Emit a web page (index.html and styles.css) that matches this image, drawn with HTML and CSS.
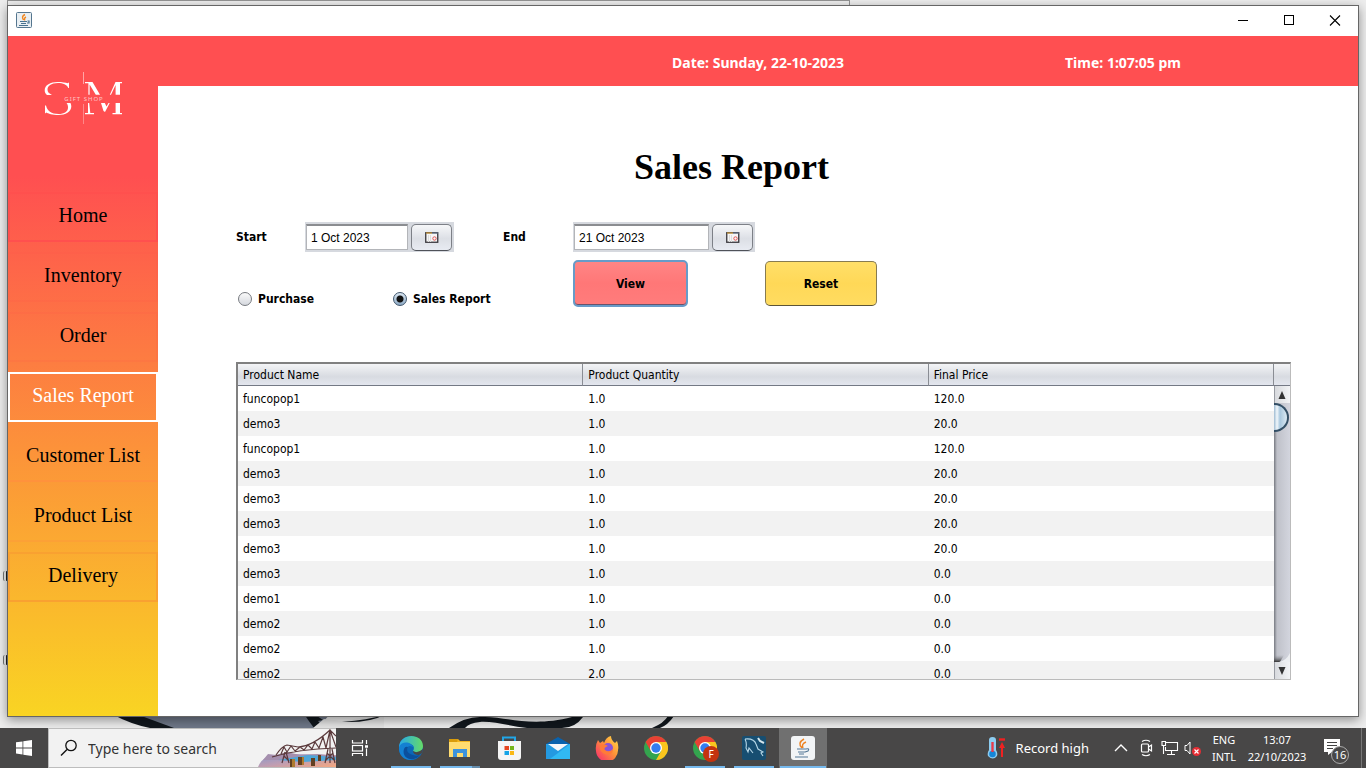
FILE: index.html
```html
<!DOCTYPE html>
<html lang="en">
<head>
<meta charset="utf-8">
<title>Sales Report</title>
<link rel="stylesheet" href="styles.css">
</head>
<body>
<div class="desktop">
  <svg class="wallpaper" viewBox="0 0 1366 14" preserveAspectRatio="none" aria-hidden="true">
    <path d="M120 0H330L318 14H168Z" fill="#6f7888"/>
    <path d="M112 0H136L174 14H150Q130 10 112 0Z" fill="#11171d"/>
    <path d="M304 0H314L323 6 318 7 324 14H314Q308 6 304 0Z" fill="#11171d"/>
    <path d="M313 14L324 5 342 7 384 0V14Z" fill="#e4e4e4"/>
    <path d="M342 8Q368 6 384 1Q370 9 342 8Z" fill="#11171d"/>
    <path d="M449 14Q466 2 482 3C505 2 530 14 572 3L583 3Q575 14 562 14H527C510 12 492 7 480 8Q469 9 465 14Z" fill="#11171d"/>
    <path d="M652 14Q664 9 668 2H674Q668 11 660 14Z" fill="#11171d"/>
  </svg>
  <span class="scrap scrap-one"></span><span class="scrap scrap-two"></span>
  <div class="back-window"></div>
  <div class="window">
    <div class="titlebar">
      <svg class="app-icon" viewBox="0 0 16 16" aria-hidden="true"><rect x=".5" y=".5" width="15" height="15" rx="1" fill="#e9eff3" stroke="#55768f"/><path d="M9 2.500C6 4 6 5.500 7.500 8M10 5C7.500 6 9 7 8.500 8.500" fill="none" stroke="#f0851d" stroke-width="1.400"/><path d="M4 9.500H11M5 11.500H10M3 13.500H12M11.500 9H13V11H11" fill="none" stroke="#47718f" stroke-width="1.200"/></svg>
      <div class="window-buttons">
        <button type="button" aria-label="Minimize"><svg viewBox="0 0 12 12"><path d="M1 5.500H11" stroke="#000"/></svg></button>
        <button type="button" aria-label="Maximize"><svg viewBox="0 0 12 12"><rect x="1.500" y=".5" width="9" height="9" fill="none" stroke="#000"/></svg></button>
        <button type="button" aria-label="Close"><svg viewBox="0 0 12 12"><path d="M1 .5 11 10.500M11 .5 1 10.500" stroke="#000" stroke-width="1.100"/></svg></button>
      </div>
    </div>
    <div class="app">
      <aside class="sidebar">
        <svg class="logo" viewBox="0 0 80 54" role="img" aria-label="SM Gift Shop">
          <path d="M40.500 1V13" stroke="#ffa5a6"/><path d="M40.500 33V53" stroke="#ff8889"/>
          <g fill="#fff">
            <path d="M26 11.500V17H25.300C24 13.500 20 12 15 12C8 12 4.500 15 4.500 18.500C4.500 21 6 22.500 9 24H4C2.500 22.800 1.700 21.500 1.700 19.300C1.700 14 7.500 11 14.500 11C19 11 23 11.600 24.500 12.300Z"/>
            <path d="M2 34.500H3C4 39.500 8.500 43 15.500 43C21.500 43 25 40.500 25 36.500C25 34.500 24.500 33 23.500 32H27.500Q28.300 33.500 28.300 35.500C28.300 40.500 22.500 44 15.500 44C9.500 44 5 42.500 3.300 41.500L2 42.500Z"/>
            <path d="M42 11H49.500L57 23.800H52.800L46.600 13.500V23.800H45.400V12.300H42ZM72.500 11H79V12.200H77V23.800H72.600V14L68 23.800H66.800ZM45 32H46.200L47.300 42H51V43.200H42V42H45ZM58 32H61.800L63.500 35.500 65.500 32H66.700L62 41 60.500 40ZM72.600 32H77V42H79V43.200H69.500V42H72.600Z"/>
          </g>
          <text x="41" y="30" class="logo-text" text-anchor="middle">GIFT SHOP</text>
        </svg>
        <nav class="nav">
          <button type="button" class="nav-item nav-home">Home</button>
          <button type="button" class="nav-item">Inventory</button>
          <button type="button" class="nav-item">Order</button>
          <button type="button" class="nav-item nav-active">Sales Report</button>
          <button type="button" class="nav-item nav-customer">Customer List</button>
          <button type="button" class="nav-item nav-product">Product List</button>
          <button type="button" class="nav-item nav-delivery">Delivery</button>
        </nav>
      </aside>
      <div class="page">
        <header class="topbar"><span class="date">Date: Sunday, 22-10-2023</span><span class="time">Time: 1:07:05 pm</span></header>
        <main class="content">
          <h1>Sales Report</h1>
          <form class="filters">
            <label for="start">Start</label>
            <div class="date-field date-start"><input id="start" type="text" value="1 Oct 2023"><button type="button" aria-label="Pick start date"><svg viewBox="0 0 14 12"><rect x=".75" y=".75" width="12" height="9.500" fill="#f6f6f6" stroke="#37363b" stroke-width="1.300"/><path d="M1 1H7" stroke="#e2a32c"/><path d="M7 1H13" stroke="#67768c"/><path d="M3.500 3V10M5.500 3V10" stroke="#ddd"/><circle cx="9.500" cy="6.500" r="1.700" fill="none" stroke="#e25555"/></svg></button></div>
            <label for="end">End</label>
            <div class="date-field date-end"><input id="end" type="text" value="21 Oct 2023"><button type="button" aria-label="Pick end date"><svg viewBox="0 0 14 12"><rect x=".75" y=".75" width="12" height="9.500" fill="#f6f6f6" stroke="#37363b" stroke-width="1.300"/><path d="M1 1H7" stroke="#e2a32c"/><path d="M7 1H13" stroke="#67768c"/><path d="M3.500 3V10M5.500 3V10" stroke="#ddd"/><circle cx="9.500" cy="6.500" r="1.700" fill="none" stroke="#e25555"/></svg></button></div>
            <div class="kinds">
              <label><input type="radio" name="kind">Purchase</label>
              <label><input type="radio" name="kind" checked>Sales Report</label>
            </div>
            <button type="button" class="action view">View</button>
            <button type="button" class="action reset">Reset</button>
          </form>
          <div class="table-panel">
            <div class="table-scroll">
              <table>
                <thead><tr><th>Product Name</th><th>Product Quantity</th><th>Final Price</th></tr></thead>
                <tbody>
                  <tr><td>funcopop1</td><td>1.0</td><td>120.0</td></tr>
                  <tr><td>demo3</td><td>1.0</td><td>20.0</td></tr>
                  <tr><td>funcopop1</td><td>1.0</td><td>120.0</td></tr>
                  <tr><td>demo3</td><td>1.0</td><td>20.0</td></tr>
                  <tr><td>demo3</td><td>1.0</td><td>20.0</td></tr>
                  <tr><td>demo3</td><td>1.0</td><td>20.0</td></tr>
                  <tr><td>demo3</td><td>1.0</td><td>20.0</td></tr>
                  <tr><td>demo3</td><td>1.0</td><td>0.0</td></tr>
                  <tr><td>demo1</td><td>1.0</td><td>0.0</td></tr>
                  <tr><td>demo2</td><td>1.0</td><td>0.0</td></tr>
                  <tr><td>demo2</td><td>1.0</td><td>0.0</td></tr>
                  <tr><td>demo2</td><td>2.0</td><td>0.0</td></tr>
                </tbody>
              </table>
            </div>
            <div class="scrollbar" aria-hidden="true">
              <div class="corner"></div>
              <div class="arrow"><svg viewBox="0 0 8 8"><path d="M4 0 7.500 8H.5Z" fill="#333"/></svg></div>
              <div class="track"><div class="thumb"></div><svg class="curve" viewBox="0 0 16 9"><defs><linearGradient id="shade" x2="0" y2="1"><stop stop-color="#8b8d95" stop-opacity="0"/><stop offset="1" stop-color="#333"/></linearGradient></defs><path d="M0 2H10L6 9H0Z" fill="url(#shade)"/><path d="M16 0V9H5Q12 8 16 0Z" fill="#eceef1"/></svg></div>
              <div class="arrow"><svg viewBox="0 0 8 8"><path d="M.5 0H7.500L4 8Z" fill="#333"/></svg></div>
            </div>
          </div>
        </main>
      </div>
    </div>
  </div>
</div>
<footer class="taskbar">
  <button type="button" class="start" aria-label="Start"><svg viewBox="0 0 16 16" fill="#fff"><path d="M0 2.300 6.500 1.400V7.500H0ZM7.300 1.300 16 0V7.500H7.300ZM0 8.400H6.500V14.500L0 13.600ZM7.300 8.400H16V16L7.300 14.700Z"/></svg></button>
  <div class="search">
    <svg class="magnifier" viewBox="0 0 18 18"><circle cx="11" cy="6.500" r="5.200" fill="none" stroke="#111" stroke-width="1.300"/><path d="M7 10.500 1 16.500" stroke="#111" stroke-width="1.400"/></svg>
    <input type="text" placeholder="Type here to search" aria-label="Type here to search">
    <svg class="bridge" viewBox="0 0 78 38">
      <defs><linearGradient id="sea" x2="1" y2="1"><stop offset="0" stop-color="#8297cd"/><stop offset=".5" stop-color="#be9db3"/><stop offset="1" stop-color="#f6a77e"/></linearGradient></defs>
      <path d="M0 38Q4 28 14 27L33 25 78 26V38Z" fill="url(#sea)"/><path d="M5 31 10 25 18 26 29 23 42 26 60 25 78 27V30L30 31Z" fill="#a58fae"/><path d="M20 31 50 26 78 28V31L45 33Z" fill="#4ea6d8"/>
      <g fill="none" stroke="#5b3a3c" stroke-width="1.200"><path d="M14 28Q40 20 78 19M18 26Q24 17 29 16L40 18Q55 17 72 1L78 7M23 25 26 18 29 23 33 17 37 22 42 18 46 21 50 16 54 20 57 13 61 19 65 8 68 19 72 1 78 18M72 1V34M70 20 67 34M74 20 77 34M69 24 76 31M75 24 68 31M27 23 24 34M28 23 31 34M26 27 31 32"/></g>
      <path d="M32 30H37V38H32ZM40 28H46V36H40ZM53 29H57V37H53ZM60 26H63V32H60Z" fill="#624021"/><path d="M34 30H37V38H34ZM44 28H46V36H44Z" fill="#ae7b2e"/>
    </svg>
  </div>
  <div class="apps">
    <button type="button" class="task" aria-label="Task view"><svg viewBox="0 0 24 24" fill="none" stroke="#fff"><path d="M4.500 4V7H14.500V4M4.500 20V17.500H14.500V20M18.500 4V8M18.500 12.500V20" stroke-width="1.200"/><rect x="4.500" y="9.500" width="10" height="5.500" stroke-width="1.200"/><path d="M17 10.500H20" stroke-width="2.500"/></svg></button>
    <button type="button" class="task open" aria-label="Edge"><svg viewBox="0 0 24 24"><defs><linearGradient id="eg"><stop stop-color="#28a9e8"/><stop offset="1" stop-color="#65db67"/></linearGradient></defs><circle cx="12" cy="12" r="12" fill="#0b67b8"/><path d="M0 11C1-4 24-3 24 10C24 16 18 18 14 15C17 10 12 7 8 8Q3 8 0 13Z" fill="url(#eg)"/><path d="M0 11C3 4 13 6 14 11Q9 8 8 13C8 18 14 21 21 19C14 28-1 24 0 11Z" fill="#1480d2"/><path d="M9 11C6 16 12 21 21 19C15 27 2 23 5 13Q6 10 9 11Z" fill="#0b4f9c"/><path d="M14 15Q18 18 24 13L23 17 20 19Q14 19 14 15Z" fill="#484747"/></svg></button>
    <button type="button" class="task open multiple" aria-label="File Explorer"><svg viewBox="0 0 24 24"><path d="M1 3H10L12 5H22V21H1Z" fill="#f4b51e"/><path d="M1 6H22V21H1Z" fill="#ffdc70"/><path d="M1 3H10L9 6H1Z" fill="#d99c0b"/><path d="M5 13H19V21H15V17H9V21H5Z" fill="#3d93dc"/></svg></button>
    <button type="button" class="task" aria-label="Microsoft Store"><svg viewBox="0 0 24 24"><path d="M6 6V1.500H18V6" fill="none" stroke="#21a6e7" stroke-width="2"/><path d="M1 5H24V21Q24 24 21 24H4Q1 24 1 21Z" fill="#f5f5f5"/><path d="M7.500 10H12V14H7.500Z" fill="#e54520"/><path d="M13 10H17V14H13Z" fill="#75b51b"/><path d="M7.500 15H12V19H7.500Z" fill="#16a4e7"/><path d="M13 15H17V19H13Z" fill="#fab814"/></svg></button>
    <button type="button" class="task" aria-label="Mail"><svg viewBox="0 0 24 24"><path d="M0 8 12 1 24 8Z" fill="#0962ad"/><path d="M0 8H24V23H0Z" fill="#249de3"/><path d="M0 8 14 17 0 23Z" fill="#2499e0"/><path d="M24 8V23H4Z" fill="#31b9f2"/><path d="M2 8H22L12 15Z" fill="#f4f6f9"/></svg></button>
    <button type="button" class="task" aria-label="Firefox"><svg viewBox="0 0 24 24"><defs><linearGradient id="ff" x1="1" x2="0" y2="1"><stop stop-color="#ffe14a"/><stop offset=".45" stop-color="#ff9138"/><stop offset="1" stop-color="#f62274"/></linearGradient></defs><path d="M3 4 5 7 8 5 9 7Q11 1 16 0Q16 4 20 7L22 5Q24 10 23 14A11 11 0 0 1 1 15Q0 9 3 4Z" fill="url(#ff)"/><circle cx="13" cy="12" r="5" fill="#8753d8"/><path d="M5 9Q9 7 13 10Q8 12 10 14 14 17 18 13C18 19 12 20 8 17Q4 14 5 9Z" fill="#ff7b37"/></svg></button>
    <button type="button" class="task" aria-label="Chrome"><svg viewBox="0 0 24 24"><circle cx="12" cy="12" r="12" fill="#34a44e"/><path d="M12 0A12 12 0 0 1 22.400 6H12L6.800 15 1.600 6A12 12 0 0 1 12 0Z" fill="#e84134"/><path d="M22.400 6A12 12 0 0 1 12 24L17.200 15 12 6Z" fill="#fac51d"/><circle cx="12" cy="12" r="6" fill="#fff"/><circle cx="12" cy="12" r="4.700" fill="#347df0"/></svg></button>
    <button type="button" class="task open" aria-label="Chrome profile"><svg viewBox="0 0 24 24"><circle cx="12" cy="12" r="12" fill="#34a44e"/><path d="M12 0A12 12 0 0 1 22.400 6H12L6.800 15 1.600 6A12 12 0 0 1 12 0Z" fill="#e84134"/><path d="M22.400 6A12 12 0 0 1 12 24L17.200 15 12 6Z" fill="#fac51d"/><circle cx="12" cy="12" r="6" fill="#fff"/><circle cx="12" cy="12" r="4.700" fill="#347df0"/></svg><span class="profile">F</span></button>
    <button type="button" class="task open" aria-label="MySQL Workbench"><svg viewBox="0 0 24 24"><rect width="24" height="24" rx="2" fill="#174e71"/><path d="M3 3Q12 2 14 8L16 13 21 16 19 17 21 20M3 3Q5 7 4 12L6 16 7 12 11 17" fill="none" stroke="#b5d6e6" stroke-width="1.100"/><path d="M16 2 18 5 22 7" fill="none" stroke="#d5e5ec" stroke-width="2"/></svg></button>
    <button type="button" class="task open current" aria-label="Java"><svg viewBox="0 0 24 24"><rect width="24" height="24" rx="3" fill="#f2f4f6"/><path d="M13 3Q6 7 11 12M15 6Q10 8 12 12" fill="none" stroke="#ee8424" stroke-width="1.500"/><path d="M6 13H15M7 16H14M8 18H13M4 21H17M15 13Q19 12 17 15L14 16" fill="none" stroke="#527795" stroke-width="1.200"/></svg></button>
  </div>
  <div class="tray">
    <div class="weather"><svg viewBox="0 0 18 24"><path d="M2 4Q2 1 5.500 1T9 4V14Q11 17 10 20Q6 25 1 20 0 17 2 14Z" fill="#8cccf0"/><circle cx="5.500" cy="18" r="3.300" fill="#1586d8"/><path d="M5.500 6V16" stroke="#e83a49" stroke-width="2.400"/><path d="M12 3.500H18" stroke="#f02121" stroke-width="2.400"/><path d="M15 6 18 12H16V21H14V12H12Z" fill="#f02121"/></svg><span>Record high</span></div>
    <svg class="chevron" viewBox="0 0 14 8"><path d="M1 7 7 1 13 7" fill="none" stroke="#fff" stroke-width="1.400"/></svg>
    <svg class="status" viewBox="0 0 18 18" fill="none" stroke="#fff" stroke-width="1.200"><rect x="3.500" y="5" width="7" height="8" rx="1"/><path d="M10.500 8 13.500 6V12L10.500 10M4 2.500Q8 0 12 2.500M4 15.500Q8 18 12 15.500"/></svg>
    <svg class="status" viewBox="0 0 18 18" fill="none" stroke="#fff" stroke-width="1.100"><path d="M5 3.500H16.500V11.500H4.500V8M10.500 12V15M6 15.500H14M1 2.500H4.500V6.500H1ZM2.500 7V15"/></svg>
    <svg class="status" viewBox="0 0 18 18"><path d="M1 6.500H3L6 3V15L3 11.500H1Z" fill="none" stroke="#fff"/><circle cx="12.500" cy="12.500" r="4.500" fill="#e62d34"/><path d="M10.500 10.500 14.500 14.500M14.500 10.500 10.500 14.500" stroke="#fff" stroke-width="1.200"/></svg>
    <div class="language">ENG<br>INTL</div>
    <div class="clock">13:07<br>22/10/2023</div>
    <button type="button" class="notices" aria-label="16 notifications"><svg viewBox="0 0 16 16"><path d="M0 0H16V13H8L4 16V13H0Z" fill="#fff"/><path d="M3 3.500H13M3 6.500H13M3 9.500H9" stroke="#444"/></svg><span>16</span></button>
  </div>
</footer>
</body>
</html>
```
FILE: styles.css
```css
* { box-sizing: border-box; }
body {
  margin: 0; min-height: 100vh; display: flex; flex-direction: column;
  font-family: "DejaVu Sans Condensed", "Noto Sans", sans-serif; font-size: 12px; color: #000;
}
button, input { font: inherit; color: inherit; }
button { padding: 0; }
svg { display: block; flex: none; }

.desktop { position: relative; flex: 1; display: flex; padding: 5px 7px 11px; background: #ededed; overflow: hidden; }
.wallpaper { position: absolute; left: 0; bottom: 0; width: 100%; height: 14px; }
.back-window { position: absolute; left: 7px; top: 0; width: 843px; height: 6px; border: 1px solid #929292; background: #eee; }
.scrap { position: absolute; left: 3px; width: 5px; height: 10px; border-left: 1px solid #777; border-right: 2px solid #222; border-radius: 2px; }
.scrap-one { top: 571px; }
.scrap-two { top: 655px; }
.window { position: relative; flex: 1; display: flex; flex-direction: column; border: 1px solid #666; background: #fff; box-shadow: 0 3px 10px rgba(0, 0, 0, .4); }
.titlebar { display: flex; height: 30px; align-items: center; justify-content: space-between; padding-left: 8px; }
.app-icon { width: 16px; height: 16px; margin-bottom: 2px; }
.window-buttons { display: flex; }
.window-buttons button { width: 46px; height: 28px; display: grid; place-items: center; border: 0; background: none; }
.window-buttons svg { width: 12px; height: 12px; }

.app { flex: 1; display: flex; }
.sidebar { width: 150px; flex: none; padding-top: 35px; background: linear-gradient(#ff4f51 0, #ff4f51 140px, #f9d423 100%); }
.logo { width: 80px; height: 54px; margin: 0 auto 67px 35px; }
.logo-text { font: 6px "Noto Sans", sans-serif; letter-spacing: 1px; fill: #ffc4c5; }
.nav { display: flex; flex-direction: column; gap: 10px; }
.nav-item { height: 50px; padding-bottom: 4px; border: 2px solid rgba(255, 80, 74, .12); background: none; font-family: "Liberation Serif", serif; font-size: 20px; }
.nav-home { border-color: #ff504e; }
.nav-active { border-color: #fff; color: #fff; }
.nav-customer { border-color: transparent transparent #ff923c; }
.nav-product { border-color: transparent transparent #fca136; }
.nav-delivery { border-color: #f9a131; }

.page { flex: 1; min-width: 0; display: flex; flex-direction: column; }
.topbar { height: 50px; display: grid; grid-template-columns: repeat(3, 1fr); align-items: center; justify-items: center; padding-top: 2px; background: #ff4f51; color: #fff; font: bold 14px "Noto Sans", sans-serif; }
.date { grid-column: 2; }
.time { padding-right: 70px; }
.content { flex: 1; display: flex; flex-direction: column; padding: 60px 67px 36px 78px; }
h1 { margin: 0; padding-right: 64px; font: bold 36px/42px "Liberation Serif", serif; text-align: center; }

.filters { display: grid; grid-template-columns: 69px 198px 70px 192px 112px; grid-template-rows: 30px 47px; row-gap: 8px; align-items: center; margin-top: 34px; font-weight: bold; }
.date-field { display: flex; gap: 3px; height: 30px; padding: 2px 2px 2px 1px; background: #d6d9df; }
.date-start { width: 149px; }
.date-end { width: 182px; }
.date-field input { flex: 1; min-width: 0; padding: 0 4px; border: 1px solid #b3b5b9; border-top: 2px solid #8b8d91; border-radius: 0; background: #fff; font: 12px "Liberation Sans", sans-serif; }
.date-field button { width: 41px; height: 27px; display: grid; place-items: center; border: 1px solid #7d8087; border-bottom-color: #4f5259; border-radius: 5px; background: linear-gradient(#f6f7f9, #dcdfe5 55%, #e8ebf2); }
.date-field svg { width: 14px; height: 12px; }
.kinds { grid-column: 1 / 4; align-self: end; display: flex; padding-left: 2px; }
.kinds label { display: flex; align-items: center; gap: 6px; width: 155px; height: 16px; }
.kinds input { appearance: none; width: 14px; height: 14px; margin: 0; border: 1px solid #777a80; border-radius: 50%; background: linear-gradient(#fafafa, #d5d8de); }
.kinds input:checked { border-color: #40566c; background: radial-gradient(circle, #111 0 3px, transparent 4px), linear-gradient(#dbe7f2, #8daac5); }
.action { border: 1px solid #877b50; border-bottom-color: #5c5437; border-radius: 5px; font-weight: bold; }
.view { width: 115px; height: 47px; border: 2px solid #679bc8; background: linear-gradient(#ff8585, #ff7777 50%, #ff7c7c); box-shadow: inset 0 -1px #69526b; }
.reset { height: 45px; background: linear-gradient(#ffdf69, #ffd857 50%, #ffdc61); }

.table-panel { flex: 1 1 0; min-height: 0; display: flex; margin-top: 55px; border: 2px solid #808080; border-right: 1px solid #bbb; border-bottom: 1px solid #bbb; }
.table-scroll { flex: 1; min-width: 0; overflow: hidden; }
table { width: 100%; table-layout: fixed; border-collapse: separate; border-spacing: 0; }
th, td { padding: 0 5px; text-align: left; font-weight: normal; }
th { height: 22px; border-right: 1px solid #8a8d94; border-bottom: 1px solid #747985; background: linear-gradient(#f3f4f6, #d8dbe1 60%, #e3e6ee); }
td { height: 25px; }
tbody tr:nth-child(even) { background: #f2f2f2; }
.scrollbar { width: 16px; display: flex; flex-direction: column; background: #e2e5ea; }
.corner { height: 22px; border-bottom: 1px solid #747985; background: linear-gradient(#f3f4f6, #d8dbe1 60%, #e3e6ee); }
.arrow { height: 17px; display: grid; place-items: center; padding-right: 2px; border-left: 1px solid #999ca3; background: linear-gradient(90deg, #d8dade, #f3f4f6); }
.arrow svg { width: 8px; height: 8px; }
.track { flex: 1; display: flex; flex-direction: column; justify-content: space-between; overflow: hidden; background: linear-gradient(90deg, #777a81, #bfc1c9 3px, #d3d5de); }
.thumb { width: 15px; height: 29px; border: 2px solid #334f66; border-left: 0; border-radius: 0 15px 15px 0; background: linear-gradient(90deg, #9ebbd2, #f2f8fc 3px, #a8c7de 6px, #dbe9f3); }
.curve { width: 16px; height: 9px; }

.taskbar { height: 40px; display: flex; background: #484747; color: #fff; font-family: "Noto Sans", sans-serif; }
.taskbar button { border: 0; background: none; }
.start { width: 48px; display: grid; place-items: center; }
.start svg { width: 16px; height: 16px; }
.search { width: 288px; display: flex; align-items: center; padding-left: 11px; border: 1px solid #bdbdbd; border-right: 0; background: #f2f2f2; }
.magnifier { width: 18px; height: 18px; margin-right: 10px; }
.search input { flex: 1; min-width: 0; padding: 0; border: 0; outline: 0; background: none; font-size: 14px; }
.search input::placeholder { color: #333; opacity: 1; }
.bridge { width: 78px; height: 38px; }
.apps { display: flex; gap: 1px; }
.task { position: relative; width: 48px; display: grid; place-items: center; }
.task:first-child { margin-right: 2px; }
.task svg { width: 24px; height: 24px; }
.taskbar .open { background: linear-gradient(#76b9ed, #76b9ed) bottom / 40px 2px no-repeat; }
.taskbar .multiple { background: linear-gradient(90deg, #76b9ed 32px, #658cab 32px) bottom / 40px 2px no-repeat; }
.taskbar .current { background: linear-gradient(#76b9ed, #76b9ed) bottom / 46px 2px no-repeat #707070; }
.profile { position: absolute; left: 22px; top: 18px; width: 16px; height: 16px; border-radius: 50%; background: #c4330f; font-size: 10px; line-height: 16px; }
.tray { flex: 1; display: flex; align-items: center; justify-content: flex-end; }
.weather { display: flex; align-items: center; gap: 11px; margin-right: 25px; font-size: 13px; }
.weather svg { width: 18px; height: 24px; }
.chevron { width: 14px; height: 8px; margin-right: 10px; }
.status { width: 18px; height: 18px; margin-right: 5px; }
.language, .clock { font-size: 11px; line-height: 17px; text-align: center; }
.language { width: 28px; margin-left: 3px; }
.clock { width: 78px; }
.taskbar .notices { position: relative; width: 46px; height: 40px; margin-right: 4px; padding: 0 0 2px 8px; border-right: 1px solid #777; }
.notices svg { width: 16px; height: 16px; }
.notices span { position: absolute; left: 15px; top: 18px; width: 18px; height: 18px; border: 1px solid #aaa; border-radius: 50%; background: #484747; font-size: 11px; line-height: 16px; }
```
